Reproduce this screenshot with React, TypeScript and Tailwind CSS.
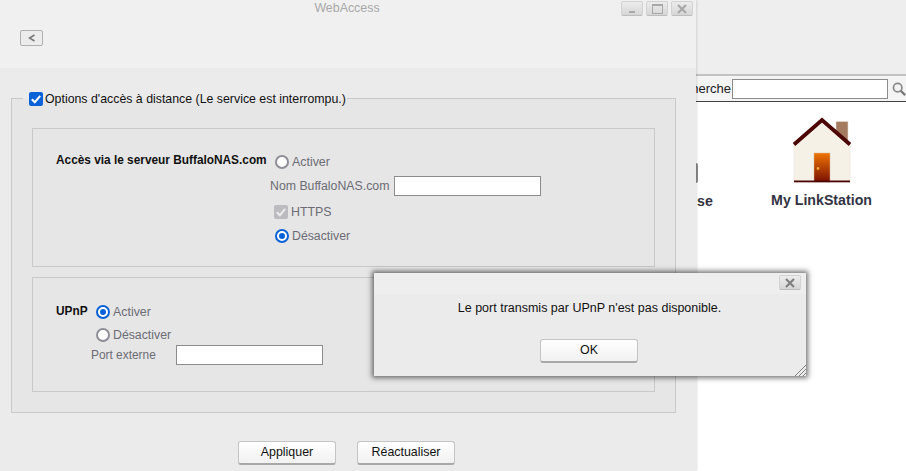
import React from "react";

const font = "font-['Liberation_Sans',Arial,sans-serif]";

function Radio({ on }: { on?: boolean }) {
  return on ? (
    <span className="flex h-[14px] w-[14px] shrink-0 items-center justify-center rounded-full border-2 border-[#0a62d8] bg-white">
      <span className="h-[6px] w-[6px] rounded-full bg-[#0a62d8]" />
    </span>
  ) : (
    <span className="h-[14px] w-[14px] shrink-0 rounded-full border-2 border-[#8e8e98] bg-white" />
  );
}

function Check({ disabled }: { disabled?: boolean }) {
  return (
    <span
      className={`flex h-[14px] w-[14px] shrink-0 items-center justify-center rounded-[2px] ${
        disabled ? "bg-[#bcbcc0]" : "bg-[#0a62d8]"
      }`}
    >
      <svg viewBox="0 0 14 14" className="h-[14px] w-[14px]">
        <path d="M2.8 7.2 L5.8 10.2 L11.2 3.8" fill="none" stroke={disabled ? "#ececec" : "#fff"} strokeWidth="2" />
      </svg>
    </span>
  );
}

function Btn({ children, w }: { children: React.ReactNode; w: string }) {
  return (
    <button
      className={`flex h-[24px] ${w} items-center justify-center rounded-[3px] border border-[#c4c4c4] border-b-2 border-b-[#a8a8a8] bg-gradient-to-b from-white to-[#f1f1f1] text-[12.4px] text-[#111]`}
    >
      {children}
    </button>
  );
}

function WinBtn({ children }: { children: React.ReactNode }) {
  return (
    <span className="flex h-[15px] w-[22px] items-center justify-center rounded-[2px] border border-[#d2d2d2] border-b-[#bdbdbd] bg-gradient-to-b from-[#ececec] to-[#d6d6d6]">
      {children}
    </span>
  );
}

function TextBox({ w }: { w: string }) {
  return <span className={`block h-[20px] ${w} border border-[#8c8c8c] bg-white`} />;
}

function CloseGlyph({ color }: { color: string }) {
  return (
    <svg viewBox="0 0 12 10" className="h-[10px] w-[12px]">
      <path d="M2 1 L10 9 M10 1 L2 9" stroke={color} strokeWidth="2.2" fill="none" />
    </svg>
  );
}

function House() {
  return (
    <svg viewBox="0 0 58 66" className="h-[66px] w-[58px]">
      <defs>
        <linearGradient id="door" x1="0" y1="0" x2="0" y2="1">
          <stop offset="0" stopColor="#ee7500" />
          <stop offset="1" stopColor="#7a0f00" />
        </linearGradient>
      </defs>
      <rect x="43" y="4.5" width="12" height="24" fill="#a47a60" stroke="#e6dcd2" strokeWidth="0.6" />
      <path d="M1 27 L29 2 L57 27 V65 H1 Z" fill="#f5f1e7" stroke="#e9e4da" strokeWidth="0.6" />
      <path d="M1 27.5 L29 3 L57 27.5" fill="none" stroke="#4c0505" strokeWidth="3.8" />
      <rect x="21" y="36" width="16" height="29" fill="url(#door)" stroke="#d8b89c" strokeWidth="0.5" />
      <circle cx="25" cy="51.5" r="1.4" fill="#f0a830" />
      <rect x="1" y="63.5" width="56" height="1.8" fill="#4c0505" />
    </svg>
  );
}

export default function App() {
  return (
    <div className={`relative h-[471px] w-[906px] overflow-hidden bg-white ${font}`}>
      {/* Application behind the window */}
      <div className="flex h-full w-full flex-col">
        <div className="h-[76px] shrink-0 border-b-2 border-[#c2c2c2] bg-[#eeeeee]" />
        <div className="flex h-[26px] shrink-0 items-center justify-end border-b border-[#444] bg-[#f4f4f4]">
          <span className="mr-[1px] text-[13px] text-[#222]">Recherche</span>
          <span className="block h-[20px] w-[156px] border border-[#8c8c8c] bg-white" />
          <svg viewBox="0 0 16 16" className="ml-[4px] h-[14px] w-[14px]">
            <circle cx="6.5" cy="6.5" r="4.8" fill="none" stroke="#8a8a8a" strokeWidth="2" />
            <path d="M10 10 L15 15" stroke="#777" strokeWidth="2.6" />
          </svg>
        </div>
        <div className="flex flex-1 items-start justify-end pr-[34px] pt-[15px]">
          <div className="flex flex-col items-center">
            <House />
            <span className="mt-[7px] text-[14.2px] font-bold text-[#333344]">My LinkStation</span>
          </div>
        </div>
      </div>

      {/* Partly hidden item label */}
      <span className="absolute left-[697px] top-[191px] text-[14.2px] font-bold text-[#333344]">se</span>
      <span className="absolute left-[696px] top-[163px] h-[20px] w-[2px] rounded-r-full bg-[#8a8a8a]" />

      {/* WebAccess window */}
      <div className="absolute left-0 top-0 flex h-[471px] w-[696px] flex-col bg-[#ebebeb] shadow-[1px_0_2px_rgba(0,0,0,0.12)]">
        <div className="h-[68px] shrink-0 bg-[#f0f0f0] px-[20px]">
          <div className="relative flex h-[15px] items-center justify-center">
            <span className="mr-[2px] mt-[1px] text-[12.4px] text-[#a8a8a8]">WebAccess</span>
            <div className="absolute right-[-17px] top-[1px] flex gap-[3px]">
              <WinBtn>
                <span className="mt-[6px] h-[2px] w-[6px] bg-[#a8a8a8]" />
              </WinBtn>
              <WinBtn>
                <span className="h-[10px] w-[11px] border border-[#a8a8a8] border-t-2" />
              </WinBtn>
              <WinBtn>
                <CloseGlyph color="#a8a8a8" />
              </WinBtn>
            </div>
          </div>
          <button className="mt-[15px] flex h-[16px] w-[23px] items-center justify-center rounded-[2px] border border-[#b0b0b0] bg-[#ececec]">
            <svg viewBox="0 0 8 8" className="h-[8px] w-[8px]">
              <path d="M6.5 1 L1.5 4 L6.5 7" fill="none" stroke="#777" strokeWidth="1.5" />
            </svg>
          </button>
        </div>

        <div className="relative mx-[11px] mt-[30px] h-[315px] w-[665px] border border-[#c9c9c9] bg-[#e6e6e6] px-[20px] pt-[29px]">
          <div className="absolute left-[11px] top-[-8px] flex h-[16px] items-center gap-[2px] px-[6px] pr-[1px] [background:linear-gradient(#ebebeb_50%,#e6e6e6_50%)]">
            <Check />
            <span className="text-[12.35px] text-[#111]">Options d'accès à distance (Le service est interrompu.)</span>
          </div>

          <div className="h-[139px] w-[623px] border border-[#c9c9c9] pl-[23px] pt-[24px]">
            <div className="flex items-start">
              <span className="w-[219px] whitespace-nowrap text-[11.85px] font-bold leading-[14px] text-[#111]">
                Accès via le serveur BuffaloNAS.com
              </span>
              <div className="mt-[2px] flex items-center gap-[3px]">
                <Radio />
                <span className="text-[12.4px] leading-[14px] text-[#6c6c74]">Activer</span>
              </div>
            </div>
            <div className="ml-[214px] mt-[7px] flex items-center gap-[5px]">
              <span className="text-[12.3px] leading-[14px] text-[#6c6c74]">Nom BuffaloNAS.com</span>
              <TextBox w="w-[147px]" />
            </div>
            <div className="ml-[218px] mt-[9px] flex items-center gap-[3px]">
              <Check disabled />
              <span className="text-[12.4px] leading-[14px] text-[#6c6c74]">HTTPS</span>
            </div>
            <div className="ml-[219px] mt-[10px] flex items-center gap-[3px]">
              <Radio on />
              <span className="text-[12.3px] leading-[14px] text-[#6c6c74]">Désactiver</span>
            </div>
          </div>

          <div className="mt-[10px] h-[115px] w-[623px] border border-[#c9c9c9] pl-[23px] pt-[26px]">
            <div className="flex items-start">
              <span className="w-[40px] text-[11.85px] font-bold leading-[14px] text-[#111]">UPnP</span>
              <div className="mt-[1px] flex items-center gap-[3px]">
                <Radio on />
                <span className="text-[12.4px] leading-[14px] text-[#6c6c74]">Activer</span>
              </div>
            </div>
            <div className="ml-[40px] mt-[9px] flex items-center gap-[3px]">
              <Radio />
              <span className="text-[12.3px] leading-[14px] text-[#6c6c74]">Désactiver</span>
            </div>
            <div className="ml-[35px] mt-[3px] flex items-center">
              <span className="w-[85px] text-[11.9px] leading-[14px] text-[#6c6c74]">Port externe</span>
              <TextBox w="w-[147px]" />
            </div>
          </div>
        </div>

        <div className="ml-[238px] mt-[28px] flex gap-[21px]">
          <Btn w="w-[98px]">Appliquer</Btn>
          <Btn w="w-[98px]">Réactualiser</Btn>
        </div>
      </div>

      {/* Message dialog */}
      <div className="absolute left-[374px] top-[273px] flex h-[103px] w-[432px] flex-col bg-[#ebebeb] shadow-[0_0_5px_2px_rgba(0,0,0,0.55)]">
        <div className="flex h-[21px] shrink-0 items-start justify-end bg-[#eeeeee] pr-[5px] pt-[2px]">
          <WinBtn>
            <CloseGlyph color="#808080" />
          </WinBtn>
        </div>
        <p className="mr-[1px] mt-[7px] text-center text-[12.5px] leading-[14px] text-[#111]">
          Le port transmis par UPnP n'est pas disponible.
        </p>
        <div className="mr-[2px] mt-[24px] flex justify-center">
          <Btn w="w-[98px]">OK</Btn>
        </div>
        <svg viewBox="0 0 12 12" className="absolute bottom-0 right-0 h-[12px] w-[12px]">
          <path d="M1 12 L12 1 M5 12 L12 5 M9 12 L12 9" stroke="#808080" strokeWidth="1" />
        </svg>
      </div>
    </div>
  );
}
